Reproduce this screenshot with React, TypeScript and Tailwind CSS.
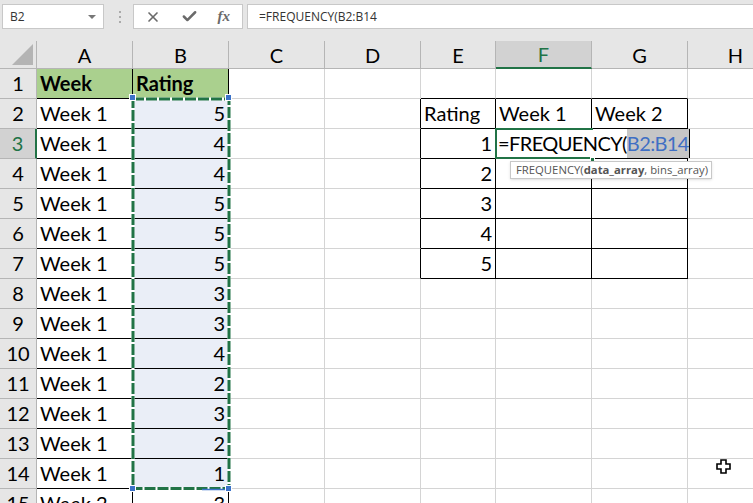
import React from 'react';
import { Check, X } from 'lucide-react';

const columns = ['A', 'B', 'C', 'D', 'E', 'F', 'G', 'H'];

const left: Record<number, string> = {
  1: 'Week',
  2: 'Week 1', 3: 'Week 1', 4: 'Week 1', 5: 'Week 1', 6: 'Week 1', 7: 'Week 1', 8: 'Week 1',
  9: 'Week 1', 10: 'Week 1', 11: 'Week 1', 12: 'Week 1', 13: 'Week 1', 14: 'Week 1', 15: 'Week 2',
};
const ratings: Record<number, string> = {
  2: '5', 3: '4', 4: '4', 5: '5', 6: '5', 7: '5', 8: '3', 9: '3', 10: '4', 11: '2', 12: '3', 13: '2', 14: '1', 15: '3',
};
const bins: Record<number, string> = { 3: '1', 4: '2', 5: '3', 6: '4', 7: '5' };

function isBlackRight(col: string, row: number) {
  if ((col === 'A' || col === 'B') && row <= 15) return true;
  if ((col === 'D' || col === 'E' || col === 'F' || col === 'G') && row >= 2 && row <= 7) return true;
  return false;
}

function isBlackBottom(col: string, row: number) {
  if ((col === 'A' || col === 'B') && row <= 15) return true;
  if ((col === 'E' || col === 'F' || col === 'G') && row >= 1 && row <= 7) return true;
  return false;
}

const Cell = ({ col, row }: { col: string; row: number }) => {
  let text = '';
  let align = 'justify-start';
  let weight = 'font-normal';
  let bg = 'bg-white';
  if (col === 'A') text = left[row];
  if (col === 'B') {
    text = row === 1 ? 'Rating' : ratings[row];
    if (row > 1) align = 'justify-end';
    if (row > 1 && row < 15) bg = 'bg-[#eaeef7]';
  }
  if ((col === 'A' || col === 'B') && row === 1) {
    weight = 'font-bold';
    bg = 'bg-[#aad08e]';
  }
  if (col === 'E' && row === 2) text = 'Rating';
  if (col === 'E' && bins[row]) {
    text = bins[row];
    align = 'justify-end';
  }
  if (col === 'F' && row === 2) text = 'Week 1';
  if (col === 'G' && row === 2) text = 'Week 2';

  return (
    <div
      className={`flex h-[30px] items-center overflow-hidden whitespace-nowrap border-r border-b px-[3px] pb-[2px] ${align} ${weight} ${bg} ${
        isBlackRight(col, row) ? 'border-r-black' : 'border-r-[#d4d4d4]'
      } ${isBlackBottom(col, row) ? 'border-b-black' : 'border-b-[#d4d4d4]'}`}
    >
      {text}
    </div>
  );
};

const Handle = ({ className }: { className: string }) => (
  <div className={`absolute h-[7px] w-[7px] border border-white bg-[#3b72c8] ${className}`} />
);

export default function App() {
  const rows = Array.from({ length: 15 }, (_, i) => i + 1);

  return (
    <div className="relative h-[503px] w-[753px] overflow-hidden bg-white font-['Lato',sans-serif] text-[20px] text-black">
      {/* formula bar */}
      <div className="flex h-[41px] items-start gap-[12px] bg-[#e6e6e6] pt-[4px] pl-[2px] font-['Open_Sans',sans-serif] text-[12px] text-[#333]">
        <div className="flex h-[25px] w-[102px] items-center justify-between border border-[#c8c8c8] bg-white pr-[7px] pl-[7px]">
          <span>B2</span>
          <span className="h-0 w-0 border-x-[4px] border-t-[4px] border-x-transparent border-t-[#777]" />
        </div>
        <div className="flex h-[25px] flex-col justify-center gap-[3px] pl-[3px]">
          <span className="h-[2px] w-[2px] bg-[#aaa]" />
          <span className="h-[2px] w-[2px] bg-[#aaa]" />
          <span className="h-[2px] w-[2px] bg-[#aaa]" />
        </div>
        <div className="flex h-[25px] w-[110px] items-center justify-between border border-[#c8c8c8] bg-white pr-[12px] pl-[11px] text-[#6a6a6a]">
          <X size={16} strokeWidth={2.5} />
          <Check size={17} strokeWidth={3.5} />
          <span className="font-['Liberation_Serif',serif] text-[15px] font-bold italic">fx</span>
        </div>
        <div className="-ml-[8px] flex h-[25px] flex-1 items-center border-y border-l border-[#c8c8c8] bg-white pl-[11px]">
          =FREQUENCY(B2:B14
        </div>
      </div>

      {/* sheet */}
      <div className="grid grid-cols-[37px_96px_96px_96px_96px_75px_96px_96px_96px]">
        <div className="relative h-[28px] border-r border-b border-[#b5b5b5] bg-[#e6e6e6]">
          <svg width="21" height="21" viewBox="0 0 21 21" className="absolute right-[3px] bottom-[3px]">
            <path d="M21 0V21H0Z" fill="#b4b4b4" />
          </svg>
        </div>
        {columns.map((c) => (
          <div
            key={c}
            className={`flex h-[28px] items-center justify-center border-r border-[#b5b5b5] ${
              c === 'F'
                ? 'border-b-2 border-b-[#217346] bg-[#d2d2d2] text-[#217346]'
                : 'border-b bg-[#e6e6e6]'
            }`}
          >
            {c}
          </div>
        ))}
        {rows.map((row) => (
          <React.Fragment key={row}>
            <div
              className={`flex h-[30px] items-center justify-center border-b border-[#b5b5b5] pb-[2px] ${
                row === 3
                  ? 'border-r-2 border-r-[#217346] bg-[#d2d2d2] text-[#217346]'
                  : 'border-r bg-[#e6e6e6]'
              }`}
            >
              {row}
            </div>
            {columns.map((c) => (
              <Cell key={c} col={c} row={row} />
            ))}
          </React.Fragment>
        ))}
      </div>

      {/* copy range B2:B14, marching ants */}
      <svg width="100" height="396" viewBox="0 0 100 396" className="absolute top-[96px] left-[131px]">
        <rect x="2" y="3" width="96" height="389.5" fill="none" stroke="#fff" strokeWidth="3" />
        <rect x="2" y="3" width="96" height="389.5" fill="none" stroke="#217346" strokeWidth="3" strokeDasharray="11 2" />
        <line x1="71" y1="393.5" x2="97" y2="393.5" stroke="#3b72c8" strokeWidth="1.5" />
      </svg>
      <Handle className="top-[94px] left-[129px]" />
      <Handle className="top-[94px] left-[225px]" />
      <Handle className="top-[485px] left-[129px]" />
      <Handle className="top-[485px] left-[225px]" />

      {/* text of the cell being edited runs over into G3 */}
      <div className="absolute top-[129px] left-[497px] flex h-[29px] w-[194px] items-center whitespace-nowrap bg-white pl-[1px] tracking-[-0.6px]">
        <span className="pb-[2px]">=FREQUENCY(</span>
        <span className="flex h-[29px] items-center bg-[#c6c6c6] pb-[2px] text-[#3f6fc4]">B2:B14</span>
        <span className="h-[29px] w-px bg-black" />
      </div>
      <div className="absolute top-[128px] left-[495px] h-[31px] w-[98px] border-2 border-r-0 border-[#217346]" />
      <div className="absolute top-[157px] left-[590px] h-[5px] w-[5px] border border-white bg-[#217346]" />

      {/* function tooltip */}
      <div className="absolute top-[161px] left-[510px] flex h-[18px] w-[202px] items-center whitespace-nowrap border border-[#c8c8c8] bg-white pl-[5px] font-['Open_Sans',sans-serif] text-[11.3px] text-[#555] shadow-sm">
        FREQUENCY(<b className="font-bold">data_array</b>, bins_array)
      </div>

      {/* cross cursor */}
      <svg width="16" height="16" viewBox="0 0 16 16" className="absolute top-[459px] left-[716px]">
        <path d="M5 1H10V5H14V10H10V14H5V10H1V5H5Z" fill="#fff" stroke="#000" strokeWidth="1.6" />
      </svg>
    </div>
  );
}
